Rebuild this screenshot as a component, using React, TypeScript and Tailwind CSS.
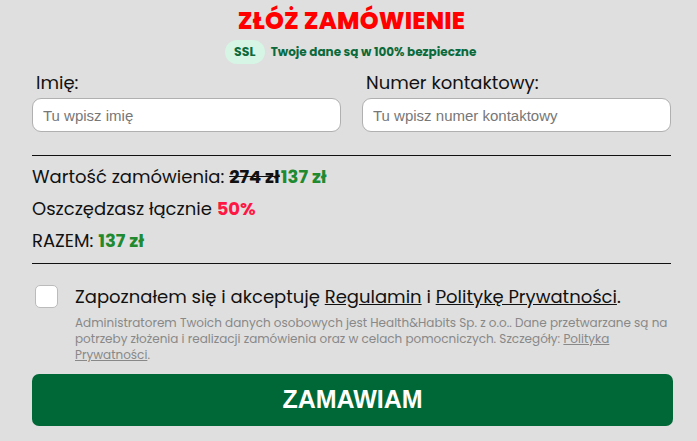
import React from "react";

export default function App() {
  const font = { fontFamily: '"Poppins", "Inter", "Noto Sans", sans-serif' };
  const arial = { fontFamily: '"Liberation Sans", Arial, sans-serif' };
  return (
    <div className="w-[697px] h-[441px] bg-[#dfdfdf] overflow-hidden" style={font}>
      <div className="ml-8 w-[639px] pt-[6px]">
        <h1 className="text-center text-[24px] leading-[30px] font-extrabold text-[#ff0000] tracking-[0.2px]">
          ZŁÓŻ ZAMÓWIENIE
        </h1>
        <div className="flex items-center justify-center gap-[6px] mt-[4px] -ml-[2px]">
          <span className="w-[40px] h-[24px] rounded-full bg-[#d6f5e5] text-[#0b6a3c] text-[12.5px] font-bold flex items-center justify-center">
            SSL
          </span>
          <span className="text-[12px] font-bold text-[#0b6a3c]">Twoje dane są w 100% bezpieczne</span>
        </div>

        <div className="grid grid-cols-2 gap-[21px] mt-[7px]">
          <div>
            <label className="block pl-[4px] text-[18px] leading-[24px] text-[#111]">Imię:</label>
            <input
              placeholder="Tu wpisz imię"
              className="mt-[3px] w-full h-[34px] rounded-[9px] border border-[#b0b0b0] bg-white px-[10px] text-[15px] text-[#333] placeholder:text-[#777] outline-none"
              style={arial}
            />
          </div>
          <div>
            <label className="block pl-[4px] text-[18px] leading-[24px] text-[#111]">Numer kontaktowy:</label>
            <input
              placeholder="Tu wpisz numer kontaktowy"
              className="mt-[3px] w-full h-[34px] rounded-[9px] border border-[#b0b0b0] bg-white px-[10px] text-[15px] text-[#333] placeholder:text-[#777] outline-none"
              style={arial}
            />
          </div>
        </div>

        <div className="mt-[23px] border-t border-[#111] pt-[4px] pb-[7px] text-[18px] text-[#111]">
          <div className="h-[32px] flex items-center">
            Wartość zamówienia:&nbsp;<span className="font-bold line-through">274 zł</span>
            <span className="font-bold text-[#1f8a2f] ml-[1px]">137 zł</span>
          </div>
          <div className="h-[32px] flex items-center">
            Oszczędzasz łącznie&nbsp;<span className="font-bold text-[#ff1744]">50%</span>
          </div>
          <div className="h-[32px] flex items-center">
            RAZEM:&nbsp;<span className="font-bold text-[#1f8a2f]">137 zł</span>
          </div>
        </div>

        <div className="border-t border-[#111] pt-[21px] flex gap-[17px]">
          <div className="w-[23px] h-[23px] shrink-0 rounded-[5px] bg-white border border-[#bbb] ml-[3px]" />
          <div>
            <p className="text-[18px] leading-[24px] text-[#111]">
              Zapoznałem się i akceptuję <span className="underline">Regulamin</span> i{" "}
              <span className="underline">Politykę Prywatności</span>.
            </p>
            <div className="mt-[6px] text-[12px] leading-[16px] text-[#888] whitespace-nowrap">
              <div>
                Administratorem Twoich danych osobowych jest Health&amp;Habits Sp. z o.o.. Dane przetwarzane są na
              </div>
              <div>
                potrzeby złożenia i realizacji zamówienia oraz w celach pomocniczych. Szczegóły:{" "}
                <span className="underline">Polityka</span>
              </div>
              <div>
                <span className="underline">Prywatności</span>.
              </div>
            </div>
          </div>
        </div>

        <button
          className="mt-[11px] w-[641px] h-[52px] rounded-[7px] bg-[#006837] text-white text-[25px] font-bold"
          style={arial}
        >
          ZAMAWIAM
        </button>
      </div>
    </div>
  );
}
